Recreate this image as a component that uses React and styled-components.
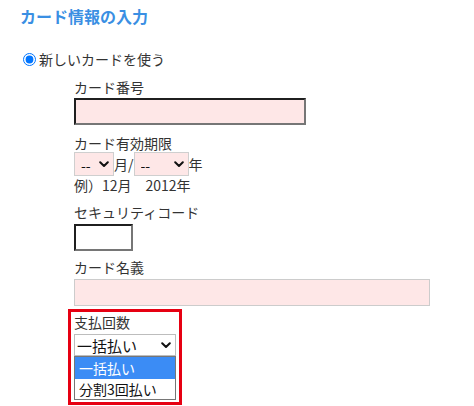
import React from 'react'
import styled, { createGlobalStyle } from 'styled-components'

const GlobalStyle = createGlobalStyle`
  html, body {
    margin: 0;
    padding: 0;
    background: #fff;
  }
  body {
    font-family: "Noto Sans CJK JP", "Noto Sans", sans-serif;
    font-size: 14px;
    color: #333;
  }
`

const Page = styled.div`
  width: 474px;
  height: 406px;
  overflow: hidden;
  padding: 6px 0 0 0;
  box-sizing: border-box;
`

const Title = styled.h2`
  margin: 0 0 0 20px;
  font-size: 16px;
  line-height: 20px;
  font-weight: 700;
  color: #3a8fe3;
`

const RadioRow = styled.label`
  display: flex;
  align-items: center;
  margin: 24px 0 0 23px;
  height: 18px;
  line-height: 18px;
`

const Radio = styled.input`
  width: 13px;
  height: 13px;
  margin: 0 3px 0 0;
`

const Form = styled.div`
  display: flex;
  flex-direction: column;
  align-items: flex-start;
  padding-left: 74px;
  margin-top: 10px;
`

const Label = styled.div`
  line-height: 18px;
  margin-top: ${p => p.$top || 0}px;
`

const TextInput = styled.input`
  box-sizing: border-box;
  width: ${p => p.$w}px;
  height: 27px;
  margin: ${p => p.$top || 0}px 0 0 0;
  padding: 0 4px;
  font: inherit;
  background: ${p => (p.$pink ? '#fee7e7' : '#fff')};
  border-width: ${p => (p.$flat ? 1 : 2)}px;
  border-style: solid;
  border-color: ${p =>
    p.$flat ? '#cccccc' : '#1f1f1f #767676 #767676 #1f1f1f'};
  outline: none;
`

const DateRow = styled.div`
  display: flex;
  align-items: center;
  height: 24px;
  margin-top: 0;
  line-height: 24px;
`

const SelectWrap = styled.span`
  position: relative;
  display: inline-flex;
`

const Select = styled.select`
  appearance: none;
  box-sizing: border-box;
  width: ${p => p.$w}px;
  height: ${p => p.$h || 24}px;
  margin: 0;
  padding: 0 0 0 ${p => p.$pad || 6}px;
  font: inherit;
  font-size: ${p => p.$fs || 14}px;
  color: #111;
  background: ${p => p.$bg || '#fee7e7'};
  border: 1px solid ${p => p.$border || '#cfcfcf'};
  border-radius: 0;
  outline: none;
`

const Chevron = styled.svg`
  position: absolute;
  right: ${p => p.$right || 6}px;
  top: 50%;
  width: 10px;
  height: 7px;
  margin-top: -3px;
  pointer-events: none;
`

const Example = styled.div`
  line-height: 18px;
  white-space: pre;
`

const PayBox = styled.div`
  position: relative;
  box-sizing: border-box;
  width: 114px;
  margin: 3px 0 0 -6px;
  padding: 1px 3px 46px 3px;
  border: 3px solid #e60012;
`

const PayLabel = styled.div`
  line-height: 18px;
  margin-bottom: 3px;
`

const Options = styled.ul`
  position: absolute;
  left: 0;
  top: 100%;
  box-sizing: border-box;
  width: 102px;
  margin: 0;
  padding: 0;
  list-style: none;
  background: #fff;
  border: 1px solid #767676;
  z-index: 2;
`

const Option = styled.li`
  height: ${p => p.$h}px;
  line-height: ${p => p.$h}px;
  padding-left: 4px;
  font-size: 14px;
  color: ${p => (p.$active ? '#fff' : '#111')};
  background: ${p => (p.$active ? '#3b8cf5' : 'transparent')};
`

const ChevronIcon = props => (
  <Chevron viewBox="0 0 10 7" {...props}>
    <path
      d="M1.2 1.2 L5 5 L8.8 1.2"
      fill="none"
      stroke="#111"
      strokeWidth="2"
      strokeLinecap="round"
      strokeLinejoin="round"
    />
  </Chevron>
)

export default function App() {
  return (
    <Page>
      <GlobalStyle />
      <Title>カード情報の入力</Title>
      <RadioRow>
        <Radio type="radio" name="card" defaultChecked />
        新しいカードを使う
      </RadioRow>
      <Form>
        <Label>カード番号</Label>
        <TextInput $w={232} $top={2} $pink />
        <Label $top={9}>カード有効期限</Label>
        <DateRow>
          <SelectWrap>
            <Select $w={40}>
              <option>--</option>
            </Select>
            <ChevronIcon $right={5} />
          </SelectWrap>
          <span>月/</span>
          <SelectWrap>
            <Select $w={55}>
              <option>--</option>
            </Select>
            <ChevronIcon $right={5} />
          </SelectWrap>
          <span>年</span>
        </DateRow>
        <Example>例）12月　2012年</Example>
        <Label $top={9}>セキュリティコード</Label>
        <TextInput $w={59} $top={3} />
        <Label $top={7}>カード名義</Label>
        <TextInput $w={356} $top={3} $pink $flat />
        <PayBox>
          <PayLabel>支払回数</PayLabel>
          <SelectWrap>
            <Select $w={102} $h={22} $bg="#fff" $border="#bdbdbd" $pad={2} $fs={15}>
              <option>一括払い</option>
              <option>分割3回払い</option>
            </Select>
            <ChevronIcon $right={5} />
            <Options>
              <Option $active $h={22}>一括払い</Option>
              <Option $h={20}>分割3回払い</Option>
            </Options>
          </SelectWrap>
        </PayBox>
      </Form>
    </Page>
  )
}
